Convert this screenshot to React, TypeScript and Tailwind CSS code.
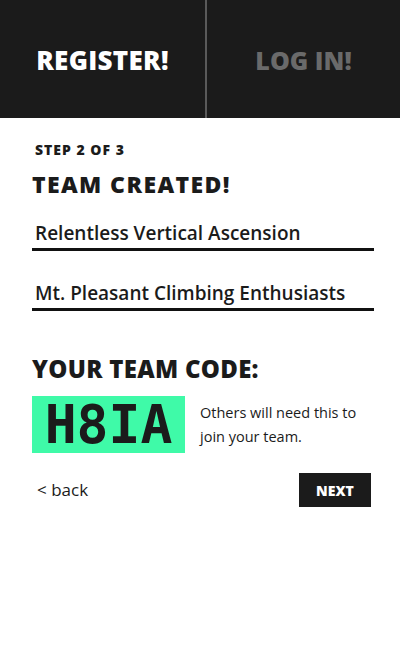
import React from 'react';

const heading = { fontFamily: '"Open Sans", "Noto Sans", sans-serif' };

const App: React.FC = () => {
  return (
    <div className="w-[400px] min-h-[666px] bg-white" style={{ fontFamily: '"Open Sans", "Noto Sans", sans-serif' }}>
      {/* Tabs */}
      <div className="flex h-[118px] bg-[#1b1b1b]">
        <div className="flex w-[207px] items-center justify-center border-r-2 border-[#5a5a5a] pt-[3px]">
          <span className="text-[26px] font-extrabold tracking-[0.3px] text-white" style={heading}>REGISTER!</span>
        </div>
        <div className="flex flex-1 items-center justify-center pt-[3px]">
          <span className="text-[25px] font-extrabold tracking-[0px] text-[#6a6a6a]" style={heading}>LOG IN!</span>
        </div>
      </div>

      <div className="pl-[32px] pr-[26px] pt-[22px]">
        <p className="pl-[3px] text-[14px] font-extrabold leading-[20px] tracking-[1px] text-[#1b1b1b]">STEP 2 OF 3</p>
        <h1 className="mt-[10px] text-[23px] font-extrabold leading-[28px] tracking-[1.4px] text-[#1b1b1b]">TEAM CREATED!</h1>

        <div className="mt-[21px] border-b-[3px] border-[#111] pb-[1px] pl-[3px]">
          <span className="text-[19px] font-semibold leading-[28px] text-[#1b1b1b]">Relentless Vertical Ascension</span>
        </div>
        <div className="mt-[28px] border-b-[3px] border-[#111] pb-[1px] pl-[3px]">
          <span className="text-[19px] font-semibold leading-[28px] text-[#1b1b1b]">Mt. Pleasant Climbing Enthusiasts</span>
        </div>

        <h2 className="mt-[43px] text-[24px] font-extrabold leading-[30px] tracking-[0.3px] text-[#1b1b1b]">YOUR TEAM CODE:</h2>

        <div className="mt-[12px] flex items-center">
          <div className="flex h-[57px] w-[153px] items-center justify-center bg-[#3ffaa8]">
            <span className="text-[53px] font-bold leading-none text-[#1b1b1b]" style={{ fontFamily: '"DejaVu Sans Mono", "Liberation Mono", monospace' }}>H8IA</span>
          </div>
          <p className="ml-[15px] text-[14.5px] leading-[24px] text-[#1b1b1b]">Others will need this to<br />join your team.</p>
        </div>

        <div className="mt-[20px] flex items-center justify-between">
          <span className="pl-[5px] text-[17px] text-[#1b1b1b]">&lt; back</span>
          <button className="mr-[3px] h-[34px] w-[72px] bg-[#1b1b1b] text-[14px] font-extrabold text-white">NEXT</button>
        </div>
      </div>
    </div>
  );
};

export default App;
